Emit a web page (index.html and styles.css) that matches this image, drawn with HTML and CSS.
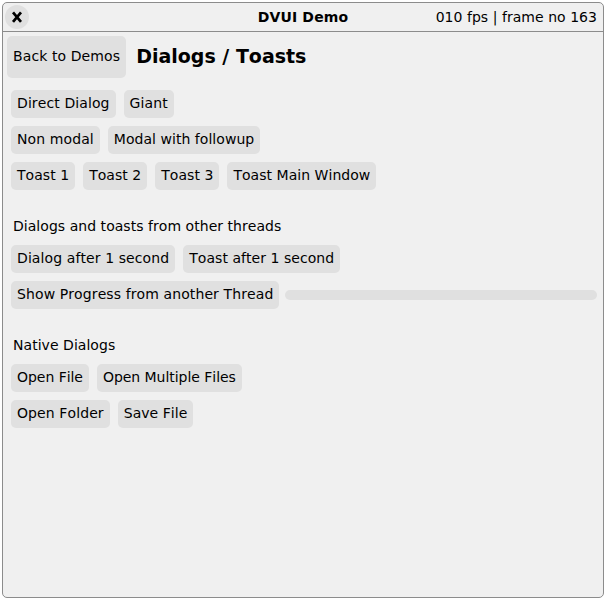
FILE: index.html
```html
<!DOCTYPE html>
<html lang="en">
<head>
<meta charset="utf-8">
<title>DVUI Demo</title>
<link rel="stylesheet" href="styles.css">
</head>
<body>
<main class="window">
  <header class="titlebar">
    <button class="close" aria-label="Close"><svg viewBox="0 0 24 24"><path d="M8 7.4L16 16.8M16 7.4L8 16.8"/></svg></button>
    <h1 class="title">DVUI Demo</h1>
    <span class="stats">010 fps | frame no 163</span>
  </header>
  <div class="heading">
    <button class="btn back loose">Back to Demos</button>
    <h2 class="page-title">Dialogs / Toasts</h2>
  </div>
  <section class="group">
    <div class="row"><button class="btn loose">Direct Dialog</button><button class="btn loose">Giant</button></div>
    <div class="row"><button class="btn loose">Non modal</button><button class="btn">Modal with followup</button></div>
    <div class="row"><button class="btn">Toast 1</button><button class="btn">Toast 2</button><button class="btn">Toast 3</button><button class="btn">Toast Main Window</button></div>
  </section>
  <section class="group">
    <p class="label">Dialogs and toasts from other threads</p>
    <div class="row"><button class="btn loose">Dialog after 1 second</button><button class="btn">Toast after 1 second</button></div>
    <div class="row"><button class="btn loose">Show Progress from another Thread</button><div class="progress"></div></div>
  </section>
  <section class="group">
    <p class="label">Native Dialogs</p>
    <div class="row"><button class="btn tight">Open File</button><button class="btn tight">Open Multiple Files</button></div>
    <div class="row"><button class="btn loose">Open Folder</button><button class="btn">Save File</button></div>
  </section>
</main>
</body>
</html>
```
FILE: styles.css
```css
* { box-sizing: border-box; }
body {
  margin: 0;
  padding: 2px;
  height: 600px;
  background: #fff;
  color: #000;
  font: 14px/16px "DejaVu Sans", sans-serif;
  font-kerning: none;
  letter-spacing: 0.04px;
}
.window {
  height: 596px;
  border: 1px solid #8c8c8c;
  border-radius: 5px;
  background: #f0f0f0;
  overflow: hidden;
}
.titlebar {
  display: grid;
  grid-template-columns: 1fr auto 1fr;
  align-items: center;
  height: 29px;
  padding: 0 6px 0 2px;
  border-bottom: 1px solid #8c8c8c;
}
.close {
  display: block;
  width: 24px;
  height: 24px;
  padding: 0;
  border: 0;
  border-radius: 50%;
  background: #e0e0e0;
}
.close svg { display: block; width: 24px; height: 24px; }
.close path { stroke: #000; stroke-width: 2.7; fill: none; }
.title { margin: 0 -2px 0 2px; font-size: 14px; letter-spacing: 0.15px; }
.stats { justify-self: end; padding-bottom: 1px; }
.heading {
  display: flex;
  align-items: center;
  gap: 10px;
  padding: 4px 4px 0;
}
.btn {
  height: 28px;
  padding: 0 6px 2px;
  border: 0;
  border-radius: 5px;
  background: #e0e0e0;
  color: inherit;
  font: inherit;
  font-kerning: none;
  letter-spacing: inherit;
  white-space: nowrap;
}
.loose { letter-spacing: 0.1px; }
.tight { letter-spacing: -0.04px; }
.back { height: 42px; }
.page-title { margin: 0; padding-bottom: 2px; font-size: 19px; line-height: 24px; letter-spacing: 0; }
.group {
  display: flex;
  flex-direction: column;
  gap: 8px;
  padding: 12px 6px 0 8px;
}
.group + .group { padding-top: 28px; }
.row { display: flex; align-items: center; gap: 8px; }
.label { margin: 0 0 3px 2px; }
.progress {
  flex: 1;
  height: 10px;
  margin-left: -2px;
  border-radius: 5px;
  background: #e0e0e0;
}
```
